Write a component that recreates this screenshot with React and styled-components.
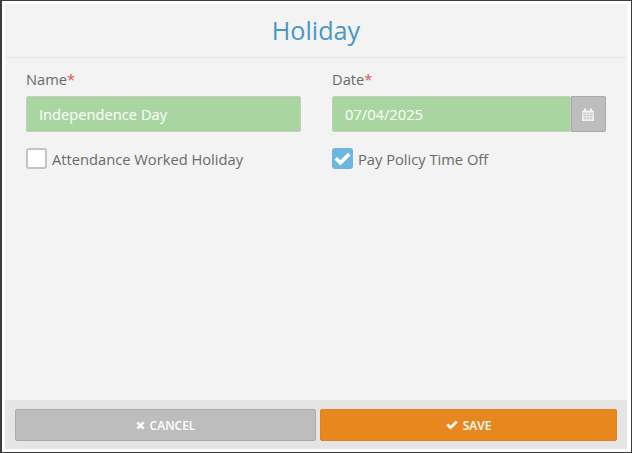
import React from "react";
import styled, { createGlobalStyle } from "styled-components";

const GlobalStyle = createGlobalStyle`
  html, body {
    margin: 0;
    padding: 0;
    background: #fff;
    font-family: "Open Sans", sans-serif;
  }
  * { box-sizing: border-box; }
`;

const Frame = styled.div`
  width: 632px;
  height: 453px;
  border: 1px solid #3c3c3c;
  border-left-width: 2px;
  background: #fff;
  padding: 3px 4px 3px 3px;
  overflow: hidden;
`;

const Modal = styled.div`
  height: 100%;
  display: flex;
  flex-direction: column;
  background: #f3f3f3;
`;

const Header = styled.div`
  height: 54px;
  flex: none;
  border-bottom: 1px solid #e5e5e5;
  display: flex;
  align-items: center;
  justify-content: center;
  padding-bottom: 2px;
`;

const Title = styled.h1`
  margin: 0;
  font-size: 25.2px;
  font-weight: 400;
  color: #4a97c4;
`;

const Body = styled.div`
  flex: 1;
  display: grid;
  grid-template-columns: 275px 274px;
  column-gap: 31px;
  align-content: start;
  padding: 10px 0 0 21px;
`;

const Field = styled.div`
  display: flex;
  flex-direction: column;
`;

const Label = styled.label`
  font-size: 14.7px;
  line-height: 22px;
  color: #6a6a6a;
  margin-bottom: 6px;
`;

const Star = styled.span`
  color: #e2534f;
`;

const InputRow = styled.div`
  display: flex;
  height: 36px;
`;

const Input = styled.div`
  flex: 1;
  background: #a9d6a0;
  border: 1px solid #c2cfbe;
  border-radius: 2px;
  color: #fff;
  font-size: 14.7px;
  line-height: 34px;
  padding-left: 12px;
`;

const Addon = styled.div`
  width: 35px;
  flex: none;
  background: #bdbdbd;
  border: 1px solid #a8a8a8;
  border-radius: 0 2px 2px 0;
  padding-right: 1px;
  display: flex;
  align-items: center;
  justify-content: center;
`;

const CheckRow = styled.div`
  display: flex;
  align-items: center;
  gap: 5px;
  margin-top: 16px;
  font-size: 14.7px;
  color: #6a6a6a;
`;

const Box = styled.span`
  width: 21px;
  height: 21px;
  flex: none;
  border-radius: 3px;
  display: flex;
  align-items: center;
  justify-content: center;
  background: ${(p) => (p.$checked ? "#6fb6de" : "#fff")};
  border: ${(p) => (p.$checked ? "none" : "2px solid #c4c4c4")};
`;

const Footer = styled.div`
  height: 49px;
  flex: none;
  background: #e5e5e5;
  display: flex;
  gap: 4px;
  padding: 9px 0 8px 10px;
`;

const Button = styled.button`
  flex: none;
  width: ${(p) => (p.$primary ? "297px" : "301px")};
  height: 32px;
  border-radius: 2px;
  border: 1px solid ${(p) => (p.$primary ? "#dc8420" : "#ababab")};
  background: ${(p) => (p.$primary ? "#e8871e" : "#bdbdbd")};
  color: #fff;
  font-family: "Open Sans", sans-serif;
  font-size: 12px;
  font-weight: 600;
  display: flex;
  align-items: center;
  justify-content: center;
  gap: 5px;
  padding: 0;
`;

const CalendarIcon = () => (
  <svg width="12" height="13" viewBox="0 0 12 13">
    <path
      fill="#f2f2f2"
      d="M0 2.5h2V1.3a1 1 0 0 1 2 0v1.2h4V1.3a1 1 0 0 1 2 0v1.2h2V13H0z"
    />
    <path
      stroke="#bdbdbd"
      strokeWidth="0.6"
      fill="none"
      d="M0 5h12M1 7.5h10M1 10h10M3 5v7M6 5v7M9 5v7"
    />
  </svg>
);

// filled tick, thick strokes with a blunt end like the icon font one
const CheckIcon = ({ width, height }) => (
  <svg width={width} height={height} viewBox="0 0 16 13">
    <path
      fill="#fff"
      d="M6 12.6 0.4 7 2.9 4.5 6 7.6 13.1 0.5 15.6 3z"
    />
  </svg>
);

const CrossIcon = () => (
  <svg width="9" height="9" viewBox="0 0 10 10">
    <path d="M1.5 1.5l7 7M8.5 1.5l-7 7" stroke="#fff" strokeWidth="2.8" fill="none" />
  </svg>
);

export default function App() {
  return (
    <>
      <GlobalStyle />
      <Frame>
        <Modal>
          <Header>
            <Title>Holiday</Title>
          </Header>
          <Body>
            <Field>
              <Label>
                Name<Star>*</Star>
              </Label>
              <InputRow>
                <Input>Independence Day</Input>
              </InputRow>
              <CheckRow>
                <Box />
                Attendance Worked Holiday
              </CheckRow>
            </Field>
            <Field>
              <Label>
                Date<Star>*</Star>
              </Label>
              <InputRow>
                <Input>07/04/2025</Input>
                <Addon>
                  <CalendarIcon />
                </Addon>
              </InputRow>
              <CheckRow>
                <Box $checked>
                  <CheckIcon width={17} height={14} />
                </Box>
                Pay Policy Time Off
              </CheckRow>
            </Field>
          </Body>
          <Footer>
            <Button>
              <CrossIcon />
              CANCEL
            </Button>
            <Button $primary>
              <CheckIcon width={12} height={10} />
              SAVE
            </Button>
          </Footer>
        </Modal>
      </Frame>
    </>
  );
}
